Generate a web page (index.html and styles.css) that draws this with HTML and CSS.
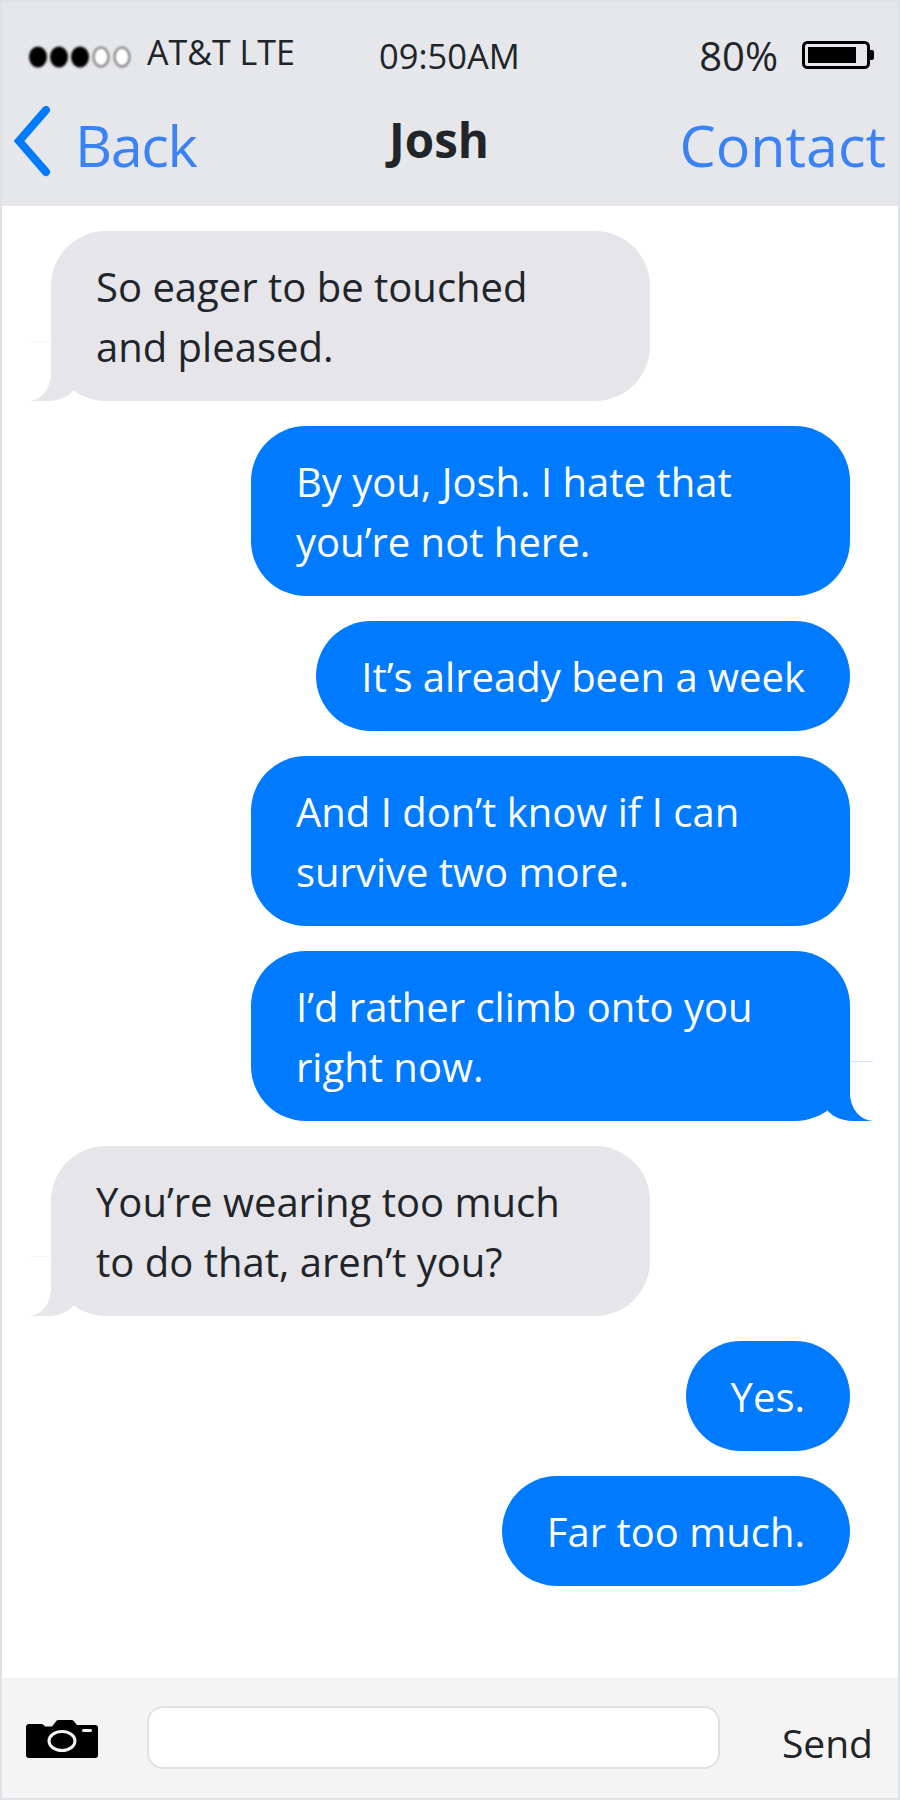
FILE: index.html
```html
<!doctype html>
<html>
<head>
    <title>Josh</title>

    <link rel="stylesheet" href="styles.css">
</head>
<body>
    <div class="phone">
      <div class="top-bar">
        <div class="status-row">
          <div class="carrier">
            <svg class="signal" width="106" height="24" viewBox="0 0 106 24">
              <ellipse cx="12" cy="12" rx="9" ry="10.5" fill="#000"/>
              <ellipse cx="33" cy="12" rx="9" ry="10.5" fill="#000"/>
              <ellipse cx="54" cy="12" rx="9" ry="10.5" fill="#000"/>
              <ellipse cx="75" cy="12" rx="7.5" ry="9.5" fill="#fff" stroke="#777" stroke-width="2"/>
              <ellipse cx="96" cy="12" rx="7.5" ry="9.5" fill="#fff" stroke="#777" stroke-width="2"/>
            </svg>
            <span>AT&amp;T LTE</span>
          </div>
          <div class="time">09:50AM</div>
          <div class="power">
            <span>80%</span>
            <svg class="battery" width="72" height="28" viewBox="0 0 72 28">
              <rect x="1.5" y="1.5" width="65" height="25" rx="4" fill="none" stroke="#000" stroke-width="3"/>
              <rect x="6" y="6" width="48" height="16" fill="#000"/>
              <path d="M68 9h2a2 2 0 0 1 2 2v6a2 2 0 0 1-2 2h-2z" fill="#000"/>
            </svg>
          </div>
        </div>
        <div class="nav-row">
          <div class="back">
            <svg class="chevron" width="38" height="72" viewBox="0 0 38 72">
              <path d="M33 5L6 36l27 31" fill="none" stroke="#007bff" stroke-width="8" stroke-linecap="round" stroke-linejoin="miter"/>
            </svg>
            <span>Back</span>
          </div>
          <div class="name">Josh</div>
          <div class="contact">Contact</div>
        </div>
      </div>

      <div class="messages">
        <div class="bubble them tail">So eager to be touched and pleased.</div>
        <div class="bubble me">By you, Josh. I hate that you’re not here.</div>
        <div class="bubble me">It’s already been a week</div>
        <div class="bubble me">And I don’t know if I can survive two more.</div>
        <div class="bubble me tail">I’d rather climb onto you right now.</div>
        <div class="bubble them tail">You’re wearing too much to do that, aren’t you?</div>
        <div class="bubble me">Yes.</div>
        <div class="bubble me">Far too much.</div>
      </div>

      <div class="input-bar">
        <svg class="camera" width="72" height="38" viewBox="0 0 72 38">
          <path fill="#000" d="M3 4h12c2 0 3 1 4 2.500h7L30 1.500C30.500 .5 31.500 0 33 0h12c1.500 0 2.500 .5 3 1.500L51 5h18c2 0 3 1 3 3v27c0 2-1 3-3 3H3c-2 0-3-1-3-3V7c0-2 1-3 3-3z"/>
          <ellipse cx="36" cy="21" rx="13" ry="9.500" fill="none" stroke="#f4f4f4" stroke-width="3"/>
          <rect x="56" y="9" width="10" height="3" rx="1.500" fill="#f4f4f4"/>
        </svg>
        <div class="text-input"></div>
        <div class="send">Send</div>
      </div>
    </div>
</body>
</html>
```

FILE: styles.css
```css
* {
  margin: 0;
  padding: 0;
  box-sizing: border-box;
}
body {
  background-color: #fff;
  color: #212529;
  font-family: "Open Sans", "Noto Sans", sans-serif;
}
.phone {
  display: flex;
  flex-direction: column;
  width: 900px;
  height: 1800px;
  border: 2px solid #dee2e6;
}
.top-bar {
  background-color: #e5e7eb;
  height: 204px;
  flex-shrink: 0;
}
.status-row {
  display: flex;
  align-items: center;
  justify-content: space-between;
  height: 96px;
  padding: 0 24px 0 24px;
}
.carrier {
  display: flex;
  align-items: center;
  gap: 15px;
  width: 353px;
  font-size: 34px;
  margin-top: 3px;
}
.signal {
  filter: blur(1px);
  margin-top: 10px;
}
.time {
  flex: 1;
  font-size: 34.5px;
  margin-top: 10px;
}
.power {
  display: flex;
  align-items: center;
  gap: 24px;
  font-size: 40px;
  margin-top: 10px;
}
.nav-row {
  display: flex;
  align-items: center;
  justify-content: space-between;
  height: 108px;
  padding: 0 12px 14px 0;
}
.back {
  display: flex;
  align-items: center;
  gap: 24px;
  width: 387px;
  padding-left: 11px;
  color: #3b82f6;
  font-size: 57.5px;
  letter-spacing: -1.4px;
}
.chevron {
  flex-shrink: 0;
  margin-top: -8px;
}
.name {
  flex: 1;
  font-size: 47.5px;
  font-weight: 700;
  margin-top: -12px;
}
.contact {
  color: #3b82f6;
  font-size: 57.5px;
}
.messages {
  flex: 1;
  display: flex;
  flex-direction: column;
  gap: 25px;
  padding: 25px 48px 0 49px;
}
.bubble {
  position: relative;
  max-width: 599px;
  padding: 26px 45px 24px;
  border-radius: 55px;
  font-size: 40px;
  line-height: 60px;
}
.them {
  align-self: flex-start;
  background-color: #e5e5ea;
  color: #212529;
}
.me {
  align-self: flex-end;
  background-color: #007bff;
  color: #fff;
}
/* speech tails, the white piece sits over the coloured one */
.tail::before,
.tail::after {
  content: "";
  position: absolute;
  bottom: 0;
}
.tail::before {
  width: 48px;
  height: 60px;
  background-color: inherit;
}
.tail::after {
  width: 22px;
  height: 59px;
  background-color: #fff;
}
.them.tail::before {
  left: -22px;
  border-bottom-right-radius: 30px 20px;
}
.them.tail::after {
  left: -22px;
  border-bottom-right-radius: 22px 28px;
  box-shadow: 0 -1px 0 #f6f6f9;
}
.me.tail::before {
  right: -23px;
  width: 49px;
  border-bottom-left-radius: 30px 20px;
}
.me.tail::after {
  right: -23px;
  width: 23px;
  border-bottom-left-radius: 23px 28px;
  box-shadow: 0 -1px 0 #cfe4ff;
}
.input-bar {
  display: flex;
  align-items: center;
  height: 120px;
  flex-shrink: 0;
  background-color: #f4f4f4;
  padding: 0 25px 0 24px;
}
.camera {
  flex-shrink: 0;
  margin-top: 2px;
}
.text-input {
  width: 573px;
  height: 63px;
  margin: -1px 0 0 49px;
  background-color: #fff;
  border: 2px solid #dee2e6;
  border-radius: 16px;
}
.send {
  margin-left: auto;
  margin-top: 8px;
  font-size: 39px;
}
```
